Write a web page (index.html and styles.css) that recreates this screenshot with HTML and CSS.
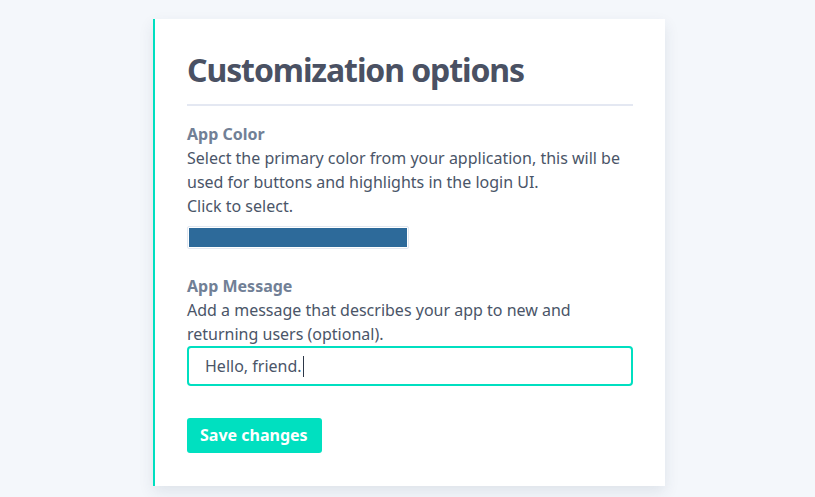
FILE: index.html
```html
<!DOCTYPE html>
<html lang="en">
<head>
<meta charset="utf-8">
<title>Customization options</title>
<link rel="stylesheet" href="styles.css">
</head>
<body>
<main class="card">
  <h1 class="title">Customization options</h1>
  <section class="field field-color">
    <div class="label">App Color</div>
    <p class="help">Select the primary color from your application, this will be used for buttons and highlights in the login UI.<br>Click to select.</p>
    <div class="swatch"><div class="swatch-fill"></div></div>
  </section>
  <section class="field field-message">
    <div class="label">App Message</div>
    <p class="help">Add a message that describes your app to new and returning users (optional).</p>
    <div class="text-input">Hello, friend.<span class="caret"></span></div>
  </section>
  <button class="save" type="button">Save changes</button>
</main>
</body>
</html>
```
FILE: styles.css
```css
html, body {
  margin: 0;
  padding: 0;
}
body {
  background: #f4f7fb;
  font-family: "Noto Sans", "Open Sans", sans-serif;
  color: #4a5568;
  font-size: 16px;
  line-height: 24px;
  padding-top: 19px;
  height: 497px;
  box-sizing: border-box;
  overflow: hidden;
}
.card {
  width: 512px;
  box-sizing: border-box;
  margin-left: 153px;
  background: #ffffff;
  border-left: 2px solid #00dfc0;
  padding: 32px 32px 33px 32px;
  box-shadow: 0 6px 14px rgba(40, 60, 90, 0.10);
}
.title {
  margin: 0;
  font-size: 32px;
  line-height: 38px;
  font-weight: 700;
  letter-spacing: -1.1px;
  color: #4a5163;
  padding-bottom: 15px;
  border-bottom: 2px solid #e4e8f2;
}
.field-color {
  margin-top: 16px;
}
.field-message {
  margin-top: 25px;
}
.label {
  font-weight: 700;
  color: #718096;
}
.help {
  margin: 0;
}
.swatch {
  margin-top: 8px;
  width: 222px;
  height: 23px;
  box-sizing: border-box;
  border: 1px solid #e2e8f0;
  padding: 1px;
  border-radius: 2px;
}
.swatch-fill {
  width: 100%;
  height: 100%;
  background: #2d6a9a;
}
.text-input {
  height: 40px;
  box-sizing: border-box;
  border: 2px solid #00dfc0;
  border-radius: 4px;
  padding: 6px 16px;
  line-height: 24px;
  color: #4a5568;
  display: flex;
  align-items: center;
}
.caret {
  display: inline-block;
  width: 1px;
  height: 21px;
  background: #2d3748;
  margin-left: 1px;
}
.save {
  margin-top: 32px;
  display: block;
  font-family: inherit;
  font-size: 16px;
  font-weight: 700;
  line-height: 24px;
  color: #ffffff;
  background: #00e0c0;
  border: none;
  border-radius: 3px;
  padding: 5px 14px 6px 13px;
  cursor: pointer;
}
```
